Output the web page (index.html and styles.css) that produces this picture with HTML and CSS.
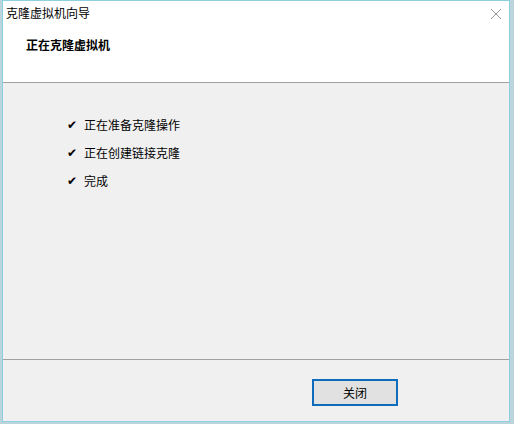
FILE: index.html
```html
<!DOCTYPE html>
<html lang="zh-CN">
<head>
<meta charset="utf-8">
<link rel="stylesheet" href="styles.css">
<title>克隆虚拟机向导</title>
</head>
<body>
<div class="window">
  <div class="titlebar">
    <span class="title">克隆虚拟机向导</span>
    <svg class="close" width="12" height="12" viewBox="0 0 12 12"><path d="M1 1L11 11M11 1L1 11" stroke="#9a9a9a" stroke-width="1" fill="none"/></svg>
  </div>
  <div class="header">
    <span class="heading">正在克隆虚拟机</span>
  </div>
  <div class="content">
    <ul class="steps">
      <li class="step"><span class="check">✔</span><span>正在准备克隆操作</span></li>
      <li class="step"><span class="check">✔</span><span>正在创建链接克隆</span></li>
      <li class="step"><span class="check">✔</span><span>完成</span></li>
    </ul>
  </div>
  <div class="footer">
    <button class="btn">关闭</button>
  </div>
</div>
</body>
</html>
```

FILE: styles.css
```css
html, body {
  margin: 0;
  padding: 0;
}
body {
  width: 514px;
  height: 424px;
  background: #bcd4db;
  font-family: "Noto Sans CJK SC", "Noto Sans", sans-serif;
  font-size: 12px;
  color: #000;
  overflow: hidden;
}
.window {
  margin-left: 2px;
  width: 506px;
  height: 420px;
  border: 1px solid #8fcfe2;
  background: #f0f0f0;
  display: flex;
  flex-direction: column;
}
.titlebar {
  height: 31px;
  background: #fff;
  display: flex;
  align-items: flex-start;
  justify-content: space-between;
  padding: 3px 7px 0 3px;
  box-sizing: border-box;
}
.title {
  line-height: 18px;
}
.close {
  margin-top: 4px;
}
.header {
  height: 51px;
  background: #fff;
  border-bottom: 1px solid #a0a0a0;
  padding: 5px 0 0 23px;
  box-sizing: border-box;
}
.heading {
  font-weight: bold;
  line-height: 16px;
  display: block;
}
.content {
  flex: 1;
  border-bottom: 1px solid #a0a0a0;
}
.steps {
  list-style: none;
  margin: 0;
  padding: 28px 0 0 64px;
}
.step {
  display: flex;
  align-items: center;
  height: 28px;
  line-height: 28px;
}
.check {
  width: 17px;
  font-family: "DejaVu Sans", sans-serif;
  font-size: 12px;
}
.footer {
  height: 61px;
  flex: none;
  padding: 19px 0 0 309px;
  box-sizing: border-box;
}
.btn {
  width: 86px;
  height: 27px;
  background: #e1e1e1;
  border: 2px solid #0f6cbd;
  box-sizing: border-box;
  font-family: "Noto Sans CJK SC", sans-serif;
  font-size: 12px;
  color: #000;
  padding: 0;
}
```
